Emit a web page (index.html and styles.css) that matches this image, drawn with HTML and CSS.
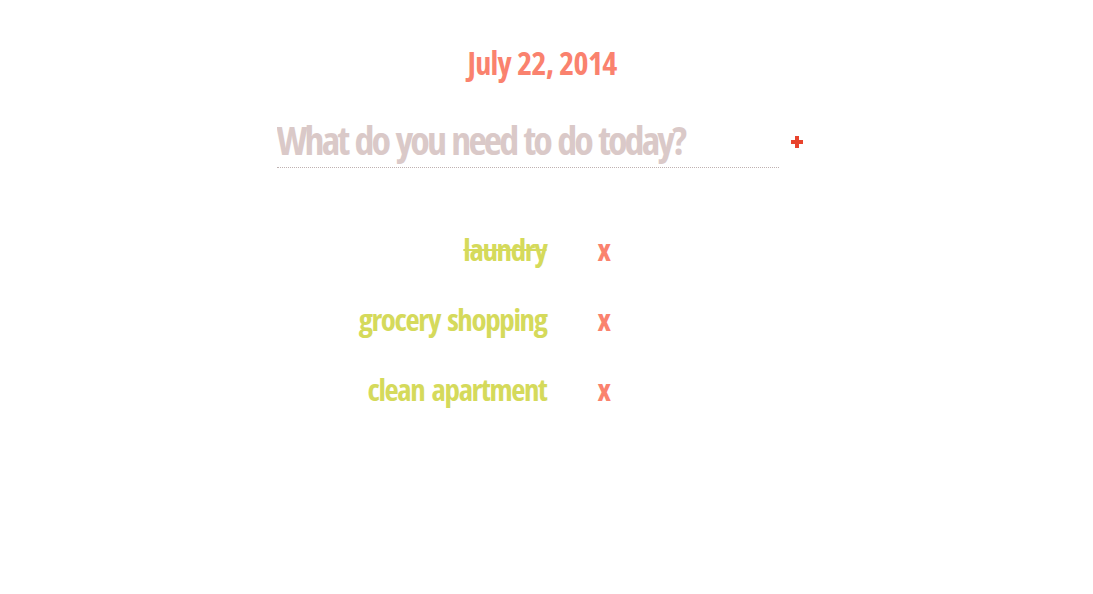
FILE: index.html
```html
<!DOCTYPE html>
<html>
<head>
<meta charset="utf-8">
<link rel="stylesheet" href="styles.css">
</head>
<body>
<main class="app">
  <h1 class="date">July 22, 2014</h1>
  <form class="add">
    <input class="add-input" type="text" placeholder="What do you need to do today?">
    <button class="add-btn" type="button" aria-label="add">
      <svg width="12" height="12" viewBox="0 0 12 12"><path d="M4 0h4v4h4v4H8v4H4V8H0V4h4z" fill="#e8432c"/></svg>
    </button>
  </form>
  <ul class="list">
    <li class="item"><span class="text done">laundry</span><span class="del">x</span></li>
    <li class="item"><span class="text">grocery shopping</span><span class="del">x</span></li>
    <li class="item"><span class="text">clean apartment</span><span class="del">x</span></li>
  </ul>
</main>
</body>
</html>
```
FILE: styles.css
```css
* { box-sizing: border-box; }
body {
  margin: 0;
  background: #fff;
  font-family: "Open Sans", "Roboto", sans-serif;
  font-stretch: 75%;
  font-weight: 700;
}
.app {
  width: 560px;
  margin: 0 auto;
  display: flex;
  flex-direction: column;
}
.date {
  margin: 43px 0 0;
  padding-right: 9px;
  text-align: center;
  font-size: 32px;
  line-height: 40px;
  font-weight: 700;
  color: #fa826e;
  letter-spacing: -0.7px;
  word-spacing: 1px;
}
.add {
  display: flex;
  align-items: center;
  margin: 32px 0 0 10px;
}
.add-input {
  width: 502px;
  height: 53px;
  border: none;
  border-bottom: 1px dotted #bfb2b2;
  font: inherit;
  font-size: 40px;
  line-height: 48px;
  letter-spacing: -2.9px;
  word-spacing: 3px;
  color: #dac9c8;
  padding: 0 0 4px;
  outline: none;
  background: transparent;
}
.add-input::placeholder { color: #dac9c8; opacity: 1; }
.add-btn {
  border: none;
  background: none;
  padding: 0;
  margin: 0 0 0 12px;
  display: flex;
}
.list {
  list-style: none;
  margin: 46px 0 0 10px;
  padding: 0;
}
.item {
  display: flex;
  align-items: baseline;
  height: 70px;
  line-height: 70px;
}
.text {
  width: 270px;
  text-align: right;
  font-size: 31px;
  letter-spacing: -1.4px;
  word-spacing: 3px;
  color: #d5da5b;
}
.done { text-decoration: line-through; text-decoration-thickness: 2px; }
.del {
  margin-left: 51px;
  font-size: 31px;
  color: #fa826e;
}
```
